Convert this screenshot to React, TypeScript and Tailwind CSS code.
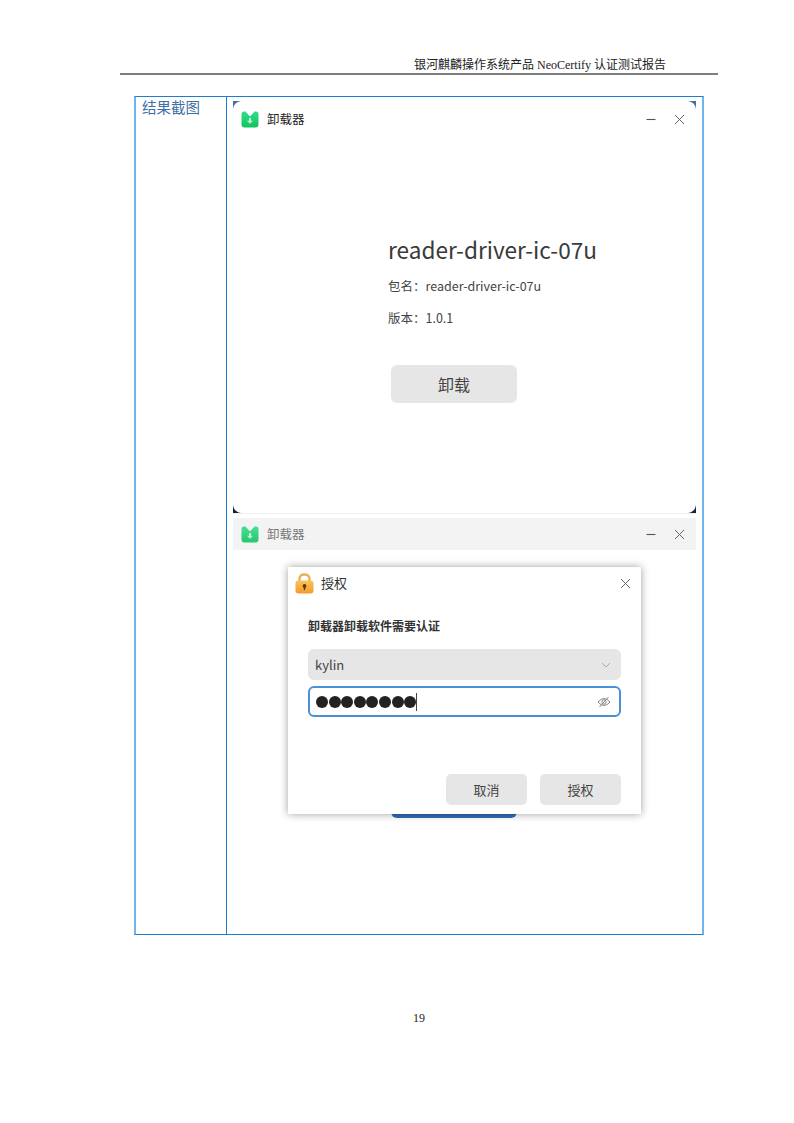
const cjk = "font-['Noto_Sans_CJK_SC','Noto_Sans',sans-serif]";

function AppIcon({ muted }: { muted?: boolean }) {
  return (
    <svg width="18" height="17" viewBox="0 0 18 17" className={muted ? 'opacity-90' : ''}>
      <defs>
        <linearGradient id="g" x1="0" y1="0" x2="0" y2="1">
          <stop offset="0" stopColor="#35dc8c" />
          <stop offset="1" stopColor="#12c25e" />
        </linearGradient>
      </defs>
      <path d="M3 0.5 H4.5 L9 5.5 L13.5 0.5 H15 Q17.5 0.5 17.5 3 V13.5 Q17.5 16.5 14.5 16.5 H3.5 Q0.5 16.5 0.5 13.5 V3 Q0.5 0.5 3 0.5 Z" fill="url(#g)" />
      <path d="M8 7 H10 V9.8 H12 L9 12.8 L6 9.8 H8 Z" fill="#b9f3d2" />
    </svg>
  );
}

function WinControls({ className }: { className?: string }) {
  return (
    <div className={`flex items-center gap-[18px] ${className ?? ''}`}>
      <svg width="10" height="10" viewBox="0 0 10 10">
        <path d="M0.5 5.5 H9.5" stroke="#555" strokeWidth="1.1" />
      </svg>
      <svg width="11" height="11" viewBox="0 0 11 11">
        <path d="M1 1 L10 10 M10 1 L1 10" stroke="#666" strokeWidth="1" />
      </svg>
    </div>
  );
}

function Corner({ className, d, fill }: { className: string; d: string; fill: string }) {
  return (
    <svg width="8" height="8" viewBox="0 0 8 8" className={`absolute ${className}`}>
      <path d={d} fill={fill} />
    </svg>
  );
}

function Lock() {
  return (
    <svg width="19" height="21" viewBox="0 0 19 21">
      <defs>
        <linearGradient id="l" x1="0" y1="0" x2="0" y2="1">
          <stop offset="0" stopColor="#fbc45c" />
          <stop offset="1" stopColor="#f39a2c" />
        </linearGradient>
      </defs>
      <path d="M4.5 9 V6 Q4.5 1.5 9.5 1.5 Q14.5 1.5 14.5 6 V9" fill="none" stroke="#e8b25c" strokeWidth="2.4" />
      <rect x="0.5" y="7.5" width="18" height="13" rx="3" fill="url(#l)" />
      <circle cx="9.5" cy="13" r="1.9" fill="#5a3a10" />
      <rect x="8.8" y="13" width="1.4" height="4" fill="#5a3a10" />
    </svg>
  );
}

export default function App() {
  return (
    <div className="relative w-[794px] h-[1123px] bg-white flex flex-col overflow-hidden">
      <div className="ml-[120px] w-[598px] h-[75px] border-b-2 border-[#7f7f7f] flex justify-end items-end pr-[52px]">
        <span className="text-[12px] leading-[16px] text-[#222] font-['Liberation_Serif','Noto_Sans_CJK_SC',serif]">
          银河麒麟操作系统产品 NeoCertify 认证测试报告
        </span>
      </div>

      <div className="ml-[134px] mt-[21px] w-[570px] h-[839px] flex border border-[#1c7ed0] border-l-2 border-r-2 border-l-[#6fb4ec] border-r-[#6fb4ec]">
        <div className="w-[91px] border-r border-[#1c7ed0] pl-[6px]">
          <span className={`block text-[14.5px] leading-[20px] text-[#3f6fa6] ${cjk}`}>结果截图</span>
        </div>

        <div className="relative flex-1 pl-[6px] pr-[6px] pt-[4px] flex flex-col">
          <section className={`relative h-[413px] bg-white border-b border-[#f0f0f0] ${cjk}`}>
            <Corner className="left-0 top-0" d="M0 0 H8 Q1 1 0 8 Z" fill="#3f6fa6" />
            <Corner className="right-0 top-0" d="M0 0 H8 V8 Q7 1 0 0 Z" fill="#3f6fa6" />
            <Corner className="left-0 bottom-0" d="M0 0 Q1 7 8 8 H0 Z" fill="#10253c" />
            <Corner className="right-0 bottom-0" d="M8 0 Q7 7 0 8 H8 Z" fill="#10253c" />

            <div className="flex items-center h-[36px] pl-[8px] pr-[11px]">
              <AppIcon />
              <span className="ml-[8px] text-[12.5px] leading-[18px] text-[#222]">卸载器</span>
              <WinControls className="ml-auto" />
            </div>

            <div className="ml-[155px] mt-[97px] flex flex-col items-start">
              <h1 className="text-[22.6px] leading-[32px] text-[#3a3a3a]">reader-driver-ic-07u</h1>
              <p className="mt-[11px] text-[12.5px] leading-[18px] text-[#444]">包名：reader-driver-ic-07u</p>
              <p className="mt-[14px] text-[12.5px] leading-[18px] text-[#444]">版本：1.0.1</p>
              <button className="ml-[3px] mt-[38px] w-[126px] h-[38px] rounded-[6px] bg-[#e6e6e6] text-[16px] text-[#444] flex items-center justify-center">
                卸载
              </button>
            </div>
          </section>

          <div className={`mt-[4px] h-[32px] bg-[#f3f3f3] flex items-center pl-[8px] pr-[11px] ${cjk}`}>
            <AppIcon muted />
            <span className="ml-[8px] text-[12.5px] leading-[18px] text-[#777]">卸载器</span>
            <WinControls className="ml-auto" />
          </div>

          {/* uninstall button still showing under the dialog */}
          <div className="absolute left-[164px] top-[700px] w-[126px] h-[21px] rounded-b-[6px] bg-[#2f6fb5]" />

          <div className={`absolute left-[61px] top-[470px] w-[353px] h-[247px] bg-white shadow-[0_0_8px_rgba(0,0,0,0.38)] ${cjk}`}>
            <div className="flex items-center h-[32px] pl-[7px] pr-[10px]">
              <Lock />
              <span className="ml-[7px] text-[13px] leading-[18px] text-[#333]">授权</span>
              <svg width="11" height="11" viewBox="0 0 11 11" className="ml-auto">
                <path d="M1 1 L10 10 M10 1 L1 10" stroke="#666" strokeWidth="1" />
              </svg>
            </div>
            <p className="ml-[20px] mt-[18px] text-[12px] leading-[18px] font-bold text-[#333]">卸载器卸载软件需要认证</p>
            <div className="mx-[20px] mt-[14px] h-[31px] rounded-[6px] bg-[#e6e6e6] flex items-center justify-between pl-[7px] pr-[10px]">
              <span className="text-[13px] text-[#444]">kylin</span>
              <svg width="10" height="6" viewBox="0 0 10 6">
                <path d="M1 1 L5 5 L9 1" fill="none" stroke="#aaa" strokeWidth="1" />
              </svg>
            </div>
            <div className="mx-[20px] mt-[6px] h-[31px] rounded-[6px] bg-white border-2 border-[#4a90d9] flex items-center pl-[6px] pr-[8px]">
              <div className="flex gap-[0.6px]">
                {[0, 1, 2, 3, 4, 5, 6, 7].map((i) => (
                  <span key={i} className="w-[12px] h-[12px] rounded-full bg-[#222]" />
                ))}
              </div>
              <span className="w-px h-[18px] bg-[#444]" />
              <svg width="14" height="12" viewBox="0 0 14 12" className="ml-auto">
                <path d="M1 6 Q7 -1 13 6 Q7 13 1 6 Z" fill="none" stroke="#888" strokeWidth="1" />
                <circle cx="7" cy="6" r="2.2" fill="none" stroke="#888" strokeWidth="1" />
                <path d="M11.5 1 L2.5 11" stroke="#888" strokeWidth="1" />
              </svg>
            </div>
            <div className="mx-[20px] mt-[57px] flex justify-end gap-[13px]">
              <button className="w-[81px] h-[31px] rounded-[5px] bg-[#e6e6e6] text-[13px] text-[#444]">取消</button>
              <button className="w-[81px] h-[31px] rounded-[5px] bg-[#e6e6e6] text-[13px] text-[#444]">授权</button>
            </div>
          </div>
        </div>
      </div>

      <div className="mt-[75px] text-center text-[12px] leading-[16px] text-[#222] font-['Liberation_Serif',serif] ml-[44px]">
        19
      </div>
    </div>
  );
}
